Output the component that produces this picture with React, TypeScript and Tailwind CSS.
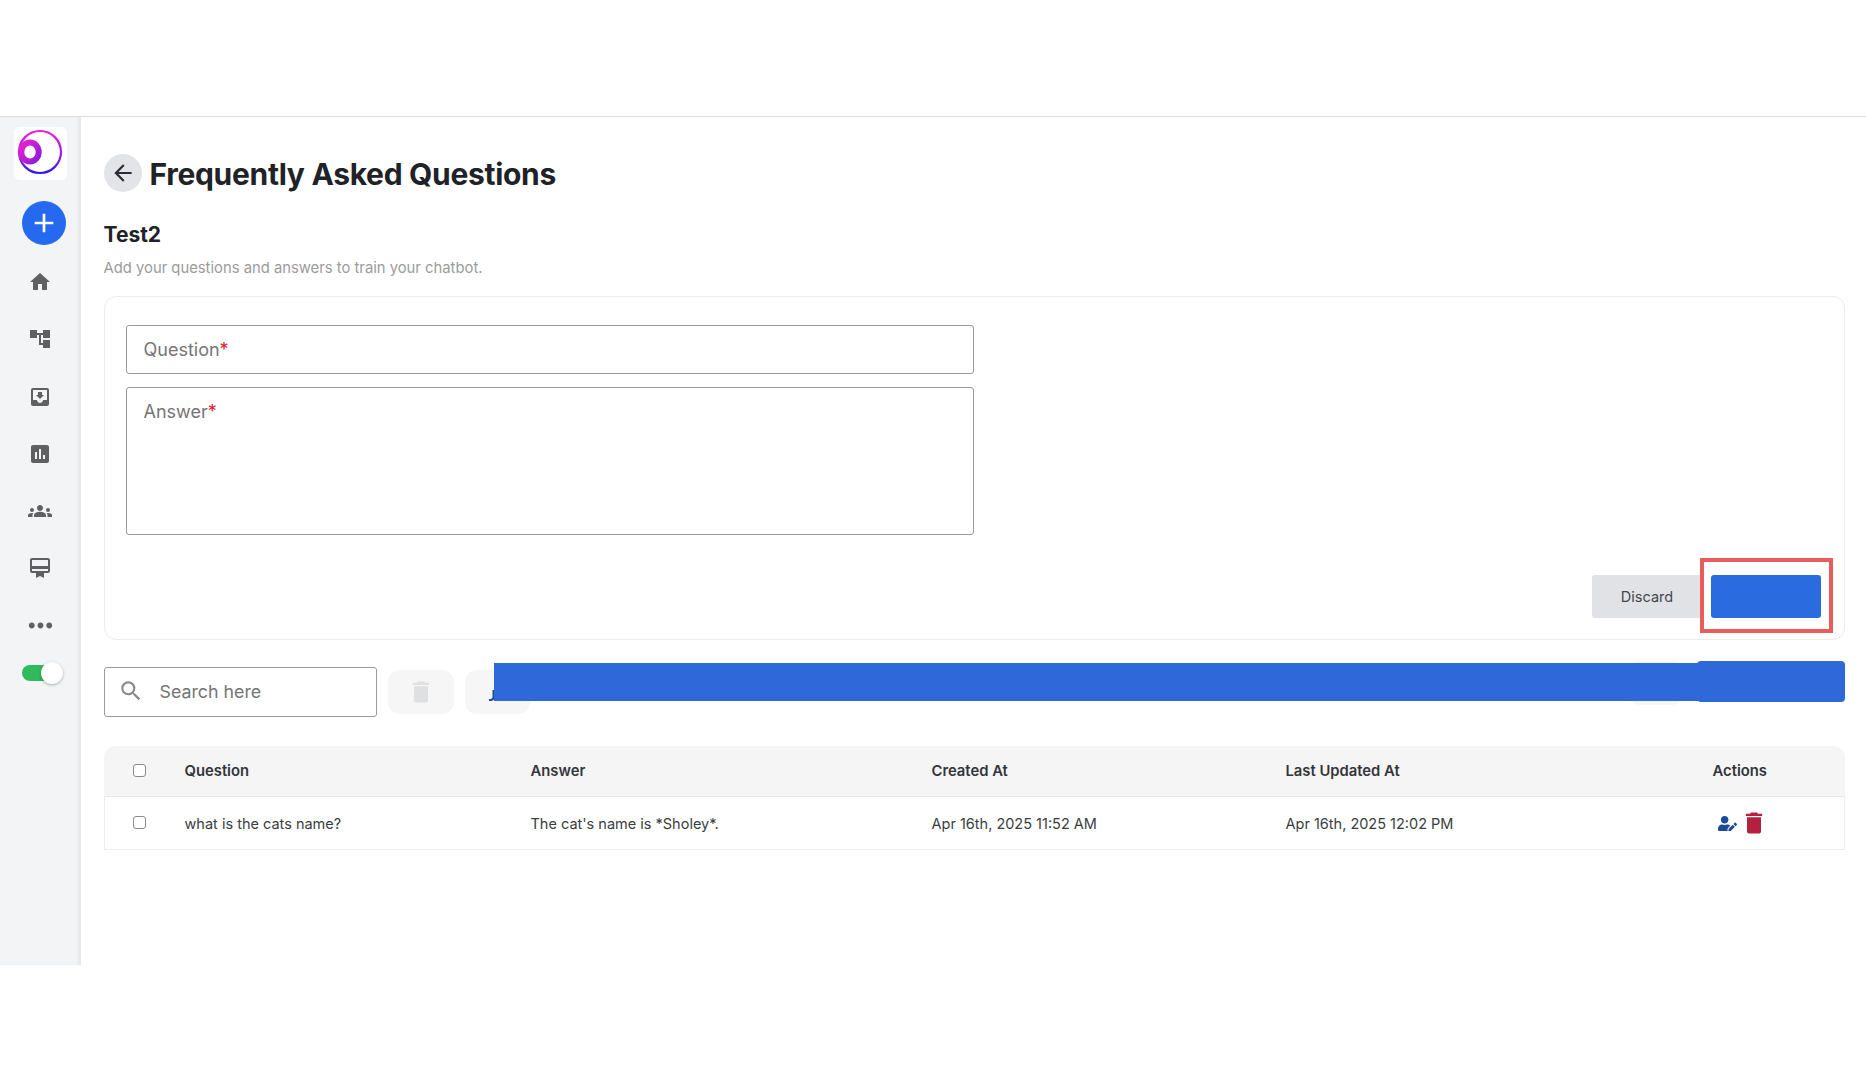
import React from "react";
import {
  MdHome, MdAccountTree, MdMoveToInbox, MdAssessment, MdGroups, MdCardMembership,
  MdMoreHoriz, MdArrowBack, MdSearch, MdDelete, MdAdd,
} from "react-icons/md";
import { FaUserEdit } from "react-icons/fa";

function Logo() {
  return (
    <svg viewBox="0 0 53 53" className="w-[53px] h-[53px]">
      <defs>
        <linearGradient id="lg" x1="0" y1="0" x2="0" y2="1">
          <stop offset="0" stopColor="#e81fd0" />
          <stop offset="0.55" stopColor="#a01ce8" />
          <stop offset="1" stopColor="#2a1cf0" />
        </linearGradient>
        <linearGradient id="lo" x1="0" y1="0" x2="1" y2="1">
          <stop offset="0" stopColor="#f01fd0" />
          <stop offset="1" stopColor="#8a1ce0" />
        </linearGradient>
      </defs>
      <circle cx="26" cy="25" r="21" fill="none" stroke="url(#lg)" strokeWidth="2.2" />
      <ellipse cx="16" cy="25" rx="8.7" ry="9.5" fill="none" stroke="url(#lo)" strokeWidth="6" />
    </svg>
  );
}

const navItems = [MdHome, MdAccountTree, MdMoveToInbox, MdAssessment, MdGroups, MdCardMembership, MdMoreHoriz];

function Sidebar() {
  return (
    <aside className="w-[81px] shrink-0 bg-[#f3f4f6] shadow-[inset_-3px_0_3px_rgba(0,0,0,0.05)] flex flex-col">
      <div className="w-[53px] h-[53px] ml-[14px] mt-[10px] bg-white rounded-md">
        <Logo />
      </div>
      <div className="w-[44px] h-[44px] ml-[22px] mt-[21px] rounded-full bg-[#2469f0] flex items-center justify-center text-white">
        <MdAdd size={32} />
      </div>
      <div className="flex flex-col w-[80px] mt-[23px] gap-[29.3px] items-center text-[#5f6062]">
        {navItems.map((Icon, i) => (
          <span key={i} className="h-[28px] flex items-center justify-center">
            <Icon size={i === 6 ? 35 : 24} />
          </span>
        ))}
      </div>
      <div className="relative w-[40px] h-[16px] ml-[22px] mt-[25px] rounded-full bg-[#2fba5c]">
        <span className="absolute right-[-1px] top-[-3px] w-[22px] h-[22px] rounded-full bg-white shadow-[0_1px_3px_rgba(0,0,0,0.3)]" />
      </div>
    </aside>
  );
}

function Field({ label, className }: { label: string; className: string }) {
  return (
    <div className={"w-[848px] border border-[#9a9a9a] rounded-[3px] px-[17px] text-[18px] leading-[24px] text-[#757575] " + className}>
      {label}
      <span className="text-[#e3202c]">*</span>
    </div>
  );
}

const grid = "grid grid-cols-[80px_346px_401px_354px_427px_131px] items-center";

function Box() {
  return <span className="block w-[13px] h-[13px] ml-[28px] -mt-[2px] border border-[#8a8a8a] rounded-[3px] bg-white" />;
}

export default function App() {
  return (
    <div className="relative w-[1866px] h-[1080px] bg-white overflow-hidden font-['Inter',sans-serif] text-[#1f2328]">
      <header className="h-[117px] border-b border-[#dcdcdc]" />
      <div className="flex h-[848px]">
        <Sidebar />
        <main className="flex-1 pl-[22.5px] pr-[23.5px]">
          <div className="flex items-center mt-[37px] h-[38px]">
            <button className="w-[38px] h-[38px] rounded-full bg-[#e2e4e8] flex items-center justify-center text-[#2a2d33]">
              <MdArrowBack size={26} />
            </button>
            <h1 className="ml-[8px] pt-[2px] text-[30px] font-bold tracking-[-0.3px] leading-[38px]">Frequently Asked Questions</h1>
          </div>
          <h2 className="mt-[29px] text-[21px] font-bold leading-[28px]">Test2</h2>
          <p className="mt-[9px] text-[14.8px] leading-[20px] text-[#9b9b9b]">Add your questions and answers to train your chatbot.</p>

          <section className="relative mt-[18px] h-[344px] border border-[#ececec] rounded-[12px] pl-[21px] pt-[28px]">
            <Field label="Question" className="h-[49px] flex items-center" />
            <Field label="Answer" className="h-[148px] mt-[13px] pt-[12px]" />
            <div className="absolute right-[22.5px] bottom-[21px] flex gap-[9px]">
              <button className="w-[110px] h-[43px] rounded-[3px] bg-[#e1e2e5] text-[14.5px] text-[#44474d]">Discard</button>
              <button className="w-[110px] h-[43px] rounded-[3px] bg-[#2a6be0]" />
            </div>
          </section>

          <div className="flex items-center mt-[27px] h-[50px] gap-[11px]">
            <div className="w-[273px] h-[50px] border border-[#9a9a9a] rounded-[3px] flex items-center pl-[13px] text-[#757575]">
              <MdSearch size={26} className="text-[#8a8a8a] -mt-[3px]" />
              <span className="ml-[16px] mt-[1px] text-[17.8px]">Search here</span>
            </div>
            <div className="w-[66px] h-[44px] rounded-[12px] bg-[#f6f6f6] flex items-center justify-center text-[#dfe0e2]">
              <MdDelete size={28} />
            </div>
            <div className="w-[65px] h-[44px] rounded-[12px] bg-[#f6f6f6] flex items-center pl-[24px]">
              <svg viewBox="0 0 6 12" className="w-[6px] h-[12px] mt-[8px]" fill="none" stroke="#1d4a94" strokeWidth="2">
                <path d="M4.5 0V7a3 3 0 0 1-3 3H0" />
              </svg>
            </div>
            <div className="ml-auto mr-[163px] self-start -mt-[5px] w-[53px] h-[43px] rounded-[10px] bg-[#f6f6f6]" />
          </div>

          <div className="mt-[29px]">
            <div className={grid + " h-[51px] bg-[#f5f5f5] rounded-t-[12px] border-b border-x border-b-[#e8e8e8] border-x-transparent text-[14.8px] font-semibold text-[#33363b]"}>
              <Box />
              <span>Question</span>
              <span>Answer</span>
              <span>Created At</span>
              <span>Last Updated At</span>
              <span>Actions</span>
            </div>
            <div className={grid + " h-[53px] pt-[1px] border-b border-x border-[#eeeeee] text-[14.5px] text-[#3a3d42]"}>
              <Box />
              <span>what is the cats name?</span>
              <span>The cat's name is *Sholey*.</span>
              <span>Apr 16th, 2025 11:52 AM</span>
              <span>Apr 16th, 2025 12:02 PM</span>
              <span className="flex items-center gap-[7px] pl-[5px]">
                <FaUserEdit size={19} className="text-[#1d4a94]" />
                <MdDelete size={28} className="text-[#b3213f] -ml-[4px] -mt-[2px]" />
              </span>
            </div>
          </div>
        </main>
      </div>

      {/* Annotation overlays painted on top of the screenshot */}
      <div className="absolute left-[1700px] top-[558px] w-[133px] h-[75px] border-[4px] border-[#e85c5c]" />
      <div className="absolute left-[494px] top-[663px] w-[1210px] h-[38px] bg-[#2f68d8]" />
      <div className="absolute left-[1697px] top-[661px] w-[148px] h-[41px] rounded-[4px] bg-[#2f68d8]" />
    </div>
  );
}
